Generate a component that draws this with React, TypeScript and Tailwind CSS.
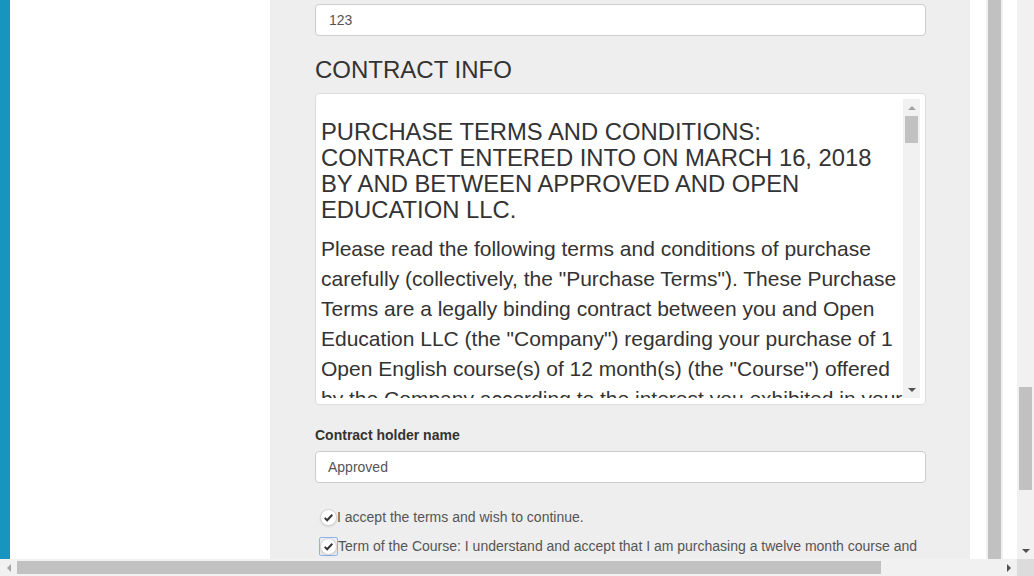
const font = { fontFamily: '"Liberation Sans", Arial, sans-serif' }

function Check() {
  return (
    <svg viewBox="0 0 16 16" className="h-[11px] w-[11px]">
      <path d="M2.5 8.5 L6 12 L13.5 4" fill="none" stroke="#333" strokeWidth="2.8" />
    </svg>
  )
}

function CheckCircle() {
  return (
    <span className="flex h-[17px] w-[17px] shrink-0 items-center justify-center rounded-full border border-[#d3d3d3] bg-white shadow-[0_1px_2px_rgba(0,0,0,0.12)]">
      <Check />
    </span>
  )
}

function Arrow({ dir, dark }: { dir: 'up' | 'down' | 'left' | 'right'; dark?: boolean }) {
  const shapes = {
    up: 'M0 4 L4 0 L8 4 Z',
    down: 'M0 0 L8 0 L4 4 Z',
    left: 'M4 0 L4 8 L0 4 Z',
    right: 'M0 0 L4 4 L0 8 Z',
  }
  const vertical = dir === 'up' || dir === 'down'
  return (
    <svg viewBox={vertical ? '0 0 8 4' : '0 0 4 8'} className={vertical ? 'h-[4px] w-[8px]' : 'h-[8px] w-[4px]'}>
      <path d={shapes[dir]} fill={dark ? '#505050' : '#a3a3a3'} />
    </svg>
  )
}

export default function App() {
  return (
    <div className="flex h-[576px] w-[1034px] flex-col overflow-hidden bg-white text-[#333]" style={font}>
      <div className="flex h-[559px]">
        <div className="w-[10px] bg-[#1795c0]" />
        <div className="w-[260px] bg-white" />

        <main className="w-[700px] bg-[#eeeeee] pl-[45px]">
          <div className="w-[611px]">
            <div className="mt-[4px] flex h-[32px] items-center rounded-[4px] border border-[#cccccc] bg-white px-[13px] text-[14px] text-[#555]">
              123
            </div>

            <h2 className="mt-[21px] mb-[10px] h-[26px] text-[24px] leading-[26px] text-[#333]">CONTRACT INFO</h2>

            <div className="h-[312px] rounded-[4px] border border-[#dddddd] bg-white p-[5px] pb-[6px]">
              <div className="flex h-full">
                <div className="flex-1 overflow-hidden">
                  <h3 className="mt-[20px] text-[23.8px] leading-[26px] uppercase text-[#333]">
                    Purchase terms and conditions:
                    <br />
                    Contract entered into on March 16, 2018 by and between Approved and Open Education LLC.
                  </h3>
                  <p className="mt-[11px] text-[21px] leading-[30px] text-[#333]">
                    Please read the following terms and conditions of purchase carefully (collectively, the "Purchase Terms"). These Purchase Terms are a legally binding contract between you and Open Education LLC (the "Company") regarding your purchase of 1 Open English course(s) of 12 month(s) (the "Course") offered by the Company according to the interest you exhibited in your application.
                  </p>
                </div>
                <div className="flex w-[17px] flex-col bg-[#f1f1f1]">
                  <div className="flex h-[17px] items-center justify-center">
                    <Arrow dir="up" />
                  </div>
                  <div className="mx-[2px] h-[27px] bg-[#c1c1c1]" />
                  <div className="flex-1" />
                  <div className="flex h-[17px] items-center justify-center">
                    <Arrow dir="down" dark />
                  </div>
                </div>
              </div>
            </div>

            <label className="mt-[22px] block h-[17px] text-[14px] leading-[17px] font-bold text-[#333]">
              Contract holder name
            </label>
            <div className="mt-[7px] flex h-[32px] items-center rounded-[4px] border border-[#cccccc] bg-white px-[12px] text-[14px] text-[#555]">
              Approved
            </div>

            <div className="mt-[25px] flex h-[18px] items-center pl-[5px] text-[14px] text-[#555]">
              <CheckCircle />
              <span>I accept the terms and wish to continue.</span>
            </div>
            <div className="mt-[11px] flex h-[19px] items-center pl-[4px] text-[14px] text-[#555]">
              <span className="flex h-[19px] w-[19px] shrink-0 items-center justify-center rounded-[2px] border border-[#8fb4ee]">
                <CheckCircle />
              </span>
              <span className="whitespace-nowrap">
                Term of the Course: I understand and accept that I am purchasing a twelve month course and
              </span>
            </div>
          </div>
        </main>

        <div className="w-[16px] bg-white" />
        <div className="flex w-[17px] justify-center bg-[#f1f1f1]">
          <div className="w-[13px] bg-[#c1c1c1]" />
        </div>
        <div className="w-[14px] bg-white" />

        <div className="flex w-[17px] flex-col bg-[#f1f1f1]">
          <div className="h-[387px]" />
          <div className="mx-[2px] h-[103px] bg-[#c1c1c1]" />
          <div className="flex-1" />
          <div className="flex h-[17px] items-center justify-center">
            <Arrow dir="down" dark />
          </div>
        </div>
      </div>

      <div className="flex h-[17px]">
        <div className="flex w-[1017px] items-center bg-[#f1f1f1]">
          <div className="flex w-[17px] items-center justify-center">
            <Arrow dir="left" />
          </div>
          <div className="h-[13px] w-[864px] bg-[#c1c1c1]" />
          <div className="flex-1" />
          <div className="flex w-[17px] items-center justify-center">
            <Arrow dir="right" dark />
          </div>
        </div>
        <div className="w-[17px] bg-[#dcdcdc]" />
      </div>
    </div>
  )
}
